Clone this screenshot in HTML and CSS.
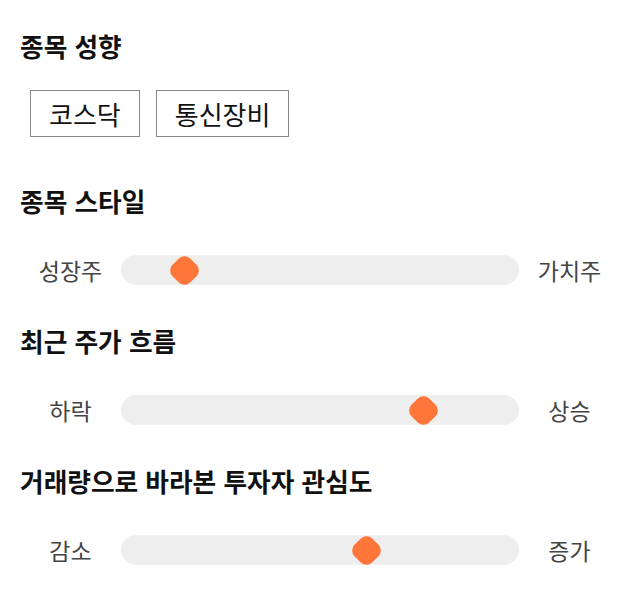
FILE: index.html
```html
<!DOCTYPE html>
<html lang="ko">
<head>
<meta charset="utf-8">
<link rel="stylesheet" href="styles.css">
</head>
<body>
<div class="page">
  <section class="section section-first">
    <h2 class="title">종목 성향</h2>
    <div class="tags">
      <span class="tag">코스닥</span>
      <span class="tag">통신장비</span>
    </div>
  </section>
  <section class="section">
    <h2 class="title">종목 스타일</h2>
    <div class="slider-row">
      <span class="label">성장주</span>
      <div class="track"><span class="thumb" style="left:16%"></span></div>
      <span class="label">가치주</span>
    </div>
  </section>
  <section class="section">
    <h2 class="title">최근 주가 흐름</h2>
    <div class="slider-row">
      <span class="label">하락</span>
      <div class="track"><span class="thumb" style="left:76.1%"></span></div>
      <span class="label">상승</span>
    </div>
  </section>
  <section class="section">
    <h2 class="title">거래량으로 바라본 투자자 관심도</h2>
    <div class="slider-row">
      <span class="label">감소</span>
      <div class="track"><span class="thumb" style="left:61.8%"></span></div>
      <span class="label">증가</span>
    </div>
  </section>
</div>
</body>
</html>
```

FILE: styles.css
```css
html, body {
  margin: 0;
  padding: 0;
  background: #ffffff;
}
body {
  font-family: "Noto Sans CJK KR", "Noto Sans", sans-serif;
  color: #111;
}
.page {
  padding: 30px 20px 0 20px;
}
.section {
  margin-bottom: 40px;
}
.section-first {
  margin-bottom: 48px;
}
.title {
  margin: 0;
  font-size: 25.7px;
  line-height: 32px;
  font-weight: 700;
  color: #111;
}
.tags {
  display: flex;
  gap: 16px;
  margin-top: 28px;
  padding-left: 10px;
}
.tag {
  display: block;
  border: 1px solid #888;
  padding: 9px 18px;
  font-size: 26px;
  line-height: 27px;
  color: #111;
}
.slider-row {
  display: flex;
  align-items: center;
  margin-top: 38px;
}
.label {
  width: 101px;
  flex: none;
  text-align: center;
  font-size: 23px;
  line-height: 30px;
  color: #444;
}
.track {
  position: relative;
  flex: 1;
  height: 30px;
  background: #eeeeee;
  border-radius: 15px;
}
.thumb {
  position: absolute;
  top: 50%;
  width: 25px;
  height: 25px;
  margin-left: -12.5px;
  margin-top: -12.5px;
  background: #ff763b;
  border-radius: 8px;
  transform: rotate(45deg);
}
```
